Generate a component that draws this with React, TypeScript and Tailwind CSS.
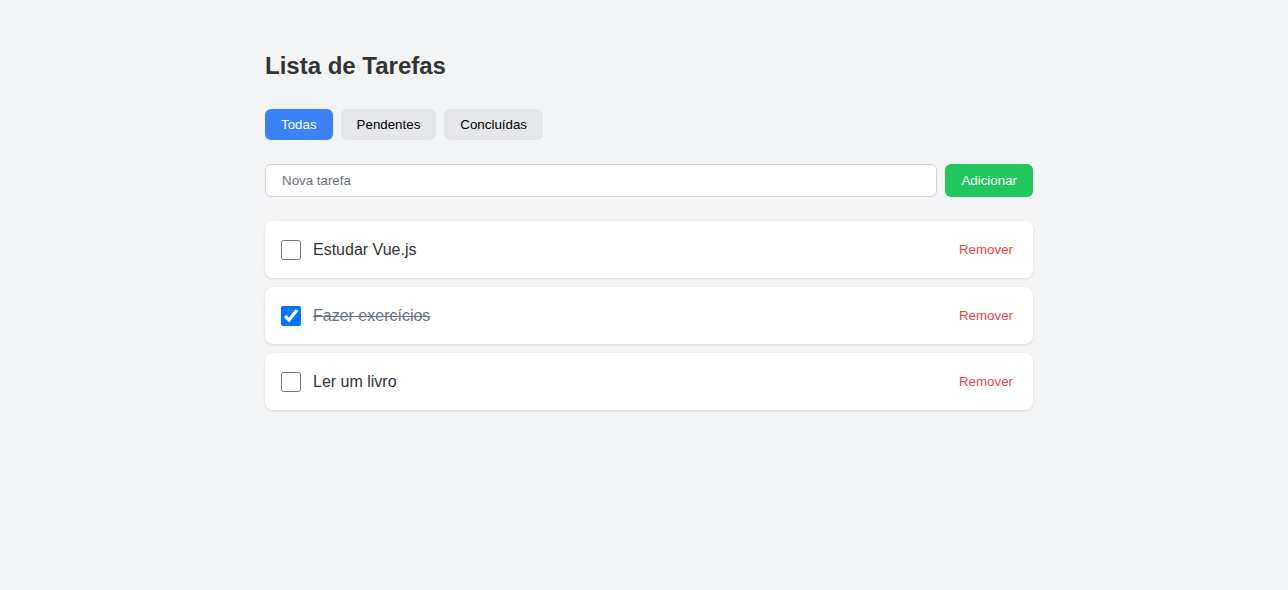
import { useState } from "react";

type Task = { id: number; text: string; done: boolean };
type Filter = "todas" | "pendentes" | "concluidas";

const FILTERS: { key: Filter; label: string }[] = [
  { key: "todas", label: "Todas" },
  { key: "pendentes", label: "Pendentes" },
  { key: "concluidas", label: "Concluídas" },
];

export default function App() {
  const [tasks, setTasks] = useState<Task[]>([
    { id: 1, text: "Estudar Vue.js", done: false },
    { id: 2, text: "Fazer exercícios", done: true },
    { id: 3, text: "Ler um livro", done: false },
  ]);
  const [filter, setFilter] = useState<Filter>("todas");
  const [draft, setDraft] = useState("");

  function addTask() {
    const text = draft.trim();
    if (!text) return;
    setTasks((prev) => [...prev, { id: Date.now(), text, done: false }]);
    setDraft("");
  }

  function toggle(id: number) {
    setTasks((prev) => prev.map((t) => (t.id === id ? { ...t, done: !t.done } : t)));
  }

  function remove(id: number) {
    setTasks((prev) => prev.filter((t) => t.id !== id));
  }

  const visible = tasks.filter((t) =>
    filter === "todas" ? true : filter === "pendentes" ? !t.done : t.done
  );

  return (
    <div className="min-h-screen bg-[#f3f4f6] pl-[10px] font-['Liberation_Sans',Arial,sans-serif]">
      <div className="max-w-3xl mx-auto pt-[50px]">
        <h1 className="text-2xl font-bold text-[#333333] leading-8">Lista de Tarefas</h1>

        {/* Filter tabs */}
        <div className="flex gap-2 mt-[27px]">
          {FILTERS.map((f) => (
            <button
              key={f.key}
              onClick={() => setFilter(f.key)}
              className={
                filter === f.key
                  ? "h-[31px] px-4 rounded-md text-[13.33px] font-medium bg-[#3b82f6] text-white"
                  : "h-[31px] px-4 rounded-md text-[13.33px] font-medium bg-[#e5e7eb] text-black"
              }
            >
              {f.label}
            </button>
          ))}
        </div>

        {/* New task */}
        <div className="flex gap-2 mt-6">
          <input
            value={draft}
            onChange={(e) => setDraft(e.target.value)}
            onKeyDown={(e) => e.key === "Enter" && addTask()}
            placeholder="Nova tarefa"
            className="flex-1 h-[33px] px-4 text-[13.33px] border border-[#d1d5db] rounded-md bg-white outline-none placeholder:text-[#6b7280]"
          />
          <button
            onClick={addTask}
            className="h-[33px] px-4 rounded-md bg-[#22c55e] text-white text-[13.33px] font-medium"
          >
            Adicionar
          </button>
        </div>

        {/* Task list */}
        <ul className="flex flex-col gap-[9px] mt-6">
          {visible.map((t) => (
            <li
              key={t.id}
              className="flex items-center justify-between bg-white rounded-lg p-4 h-[57px] shadow-[0_1px_3px_rgba(0,0,0,0.1)]"
            >
              <label className="flex items-center gap-3 cursor-pointer">
                <input
                  type="checkbox"
                  checked={t.done}
                  onChange={() => toggle(t.id)}
                  className="w-5 h-5 m-0"
                />
                <span
                  className={
                    t.done ? "text-base line-through text-[#6b7280]" : "text-base text-[#333333]"
                  }
                >
                  {t.text}
                </span>
              </label>
              <button
                onClick={() => remove(t.id)}
                className="text-[13.33px] text-[#ef4444] px-1"
              >
                Remover
              </button>
            </li>
          ))}
        </ul>
      </div>
    </div>
  );
}
